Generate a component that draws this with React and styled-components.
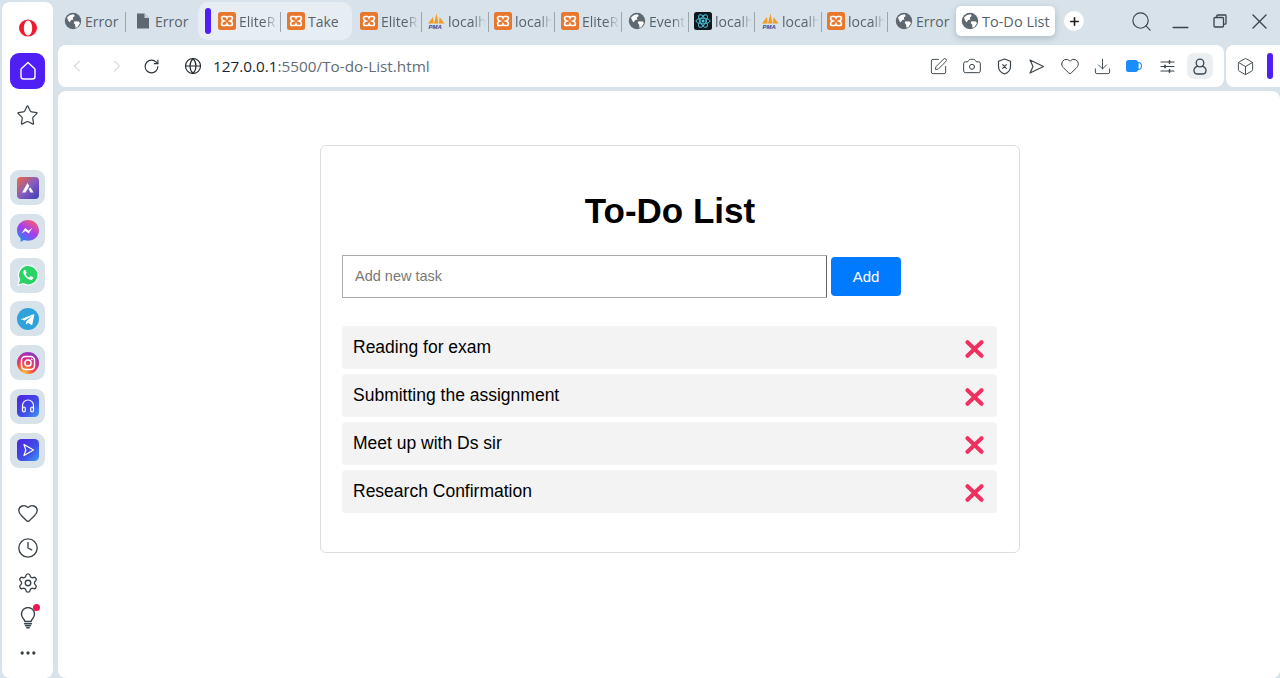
import React from 'react';
import styled, { createGlobalStyle } from 'styled-components';
import {
  ChevronLeft,
  ChevronRight,
  RotateCw,
  Globe,
  SquarePen,
  Camera,
  Heart,
  Download,
  Box,
  Search,
  Minus,
  Plus,
  Star,
  Clock,
  Settings,
  MoreHorizontal,
} from 'lucide-react';

const GlobalStyle = createGlobalStyle`
  html, body {
    margin: 0;
    height: 100%;
    overflow: hidden;
    background: #d7e2ea;
  }
  * { box-sizing: border-box; }
`;

/* favicons and logos */
const GlobeFav = () => (
  <svg width="18" height="18" viewBox="0 0 18 18">
    <circle cx="9" cy="9" r="8.2" fill="#5d6870" />
    <path d="M3 5.5l3-2.6 3.6-.6 1.2 1.6-2 1.6.6 2-2.2.6-1.6 2.4-1.6-2.2zM10.5 9.2l4.6.2.8 1.8-2.6 4-1.8.6-.4-3.2-1.4-1.6z" fill="#fff" />
  </svg>
);

const DocFav = () => (
  <svg width="18" height="18" viewBox="0 0 18 18">
    <path d="M3 1.5h7.5L15 6v10.5H3z" fill="#5d6870" />
    <path d="M10.5 1.5V6H15z" fill="#c9d3db" />
  </svg>
);

const XamppFav = () => (
  <svg width="18" height="18" viewBox="0 0 18 18">
    <rect width="18" height="18" rx="2.5" fill="#e8772e" />
    <path d="M5 4.5h2.6c.8 0 1 .8 1.4 1.6.4-.8.6-1.6 1.4-1.6H13c1 0 1.4 1 1.4 2 0 1.2-1 2-2.4 2.500 1.400.5 2.400 1.300 2.400 2.500 0 1-.4 2-1.400 2h-2.600c-.8 0-1-.8-1.400-1.600-.4.8-.6 1.600-1.400 1.600H5c-1 0-1.400-1-1.400-2 0-1.200 1-2 2.400-2.500-1.400-.5-2.400-1.300-2.400-2.500 0-1 .4-2 1.400-2z" fill="none" stroke="#fff" strokeWidth="1.700" />
  </svg>
);

const PmaFav = () => (
  <svg width="18" height="18" viewBox="0 0 18 18">
    <path d="M1 11.500L6 5l.6 6.500zM7 11.500L9.500 1.500l2 10zM12 11.500L12.500 5l5 6.500z" fill="#f29b1f" />
    <text x="1.500" y="17" fontFamily="Liberation Sans, sans-serif" fontSize="6" fontWeight="700" fontStyle="italic" fill="#35468f">PMA</text>
  </svg>
);

const ReactFav = () => (
  <svg width="18" height="18" viewBox="0 0 18 18">
    <rect width="18" height="18" rx="2.500" fill="#10181f" />
    <g fill="none" stroke="#4fc3dc" strokeWidth="0.900">
      <ellipse cx="9" cy="9" rx="7" ry="2.800" />
      <ellipse cx="9" cy="9" rx="7" ry="2.800" transform="rotate(60 9 9)" />
      <ellipse cx="9" cy="9" rx="7" ry="2.800" transform="rotate(120 9 9)" />
    </g>
    <circle cx="9" cy="9" r="1.500" fill="#4fc3dc" />
  </svg>
);

const OperaLogo = () => (
  <svg width="18" height="18" viewBox="0 0 18 18">
    <ellipse cx="9" cy="9" rx="9" ry="8.600" fill="#f01c2e" />
    <ellipse cx="9" cy="9" rx="4.200" ry="7.400" fill="#fff" />
  </svg>
);

const HomeGlyph = () => (
  <svg width="18" height="20" viewBox="0 0 18 20" fill="none" stroke="#fff" strokeWidth="1.400" strokeLinejoin="round">
    <path d="M9 1.500l6.500 6c.4.4.5.7.5 1.200v6.800c0 1.600-1 2.500-2.500 2.500h-9C3 18 2 17.100 2 15.500V8.700c0-.5.100-.8.500-1.200z" />
  </svg>
);

const ArcApp = () => (
  <svg width="22" height="22" viewBox="0 0 22 22">
    <defs>
      <linearGradient id="arc" x1="0" y1="0" x2="1" y2="1">
        <stop offset="0" stopColor="#ef6a35" />
        <stop offset="0.500" stopColor="#8a5bc0" />
        <stop offset="1" stopColor="#3a3fb5" />
      </linearGradient>
    </defs>
    <rect width="22" height="22" rx="4" fill="url(#arc)" />
    <path d="M5 15.500L10.500 6l1.800 3-3.800 6.500zM11.500 12l2-1.500 3 5h-3z" fill="#fff" />
  </svg>
);

const MessengerApp = () => (
  <svg width="22" height="22" viewBox="0 0 22 22">
    <defs>
      <linearGradient id="msg" x1="0.200" y1="1" x2="0.800" y2="0">
        <stop offset="0" stopColor="#1e8cf5" />
        <stop offset="0.500" stopColor="#a33df0" />
        <stop offset="1" stopColor="#fb5f6e" />
      </linearGradient>
    </defs>
    <path d="M11 0C4.900 0 0 4.500 0 10.500c0 3.200 1.400 5.900 3.600 7.800V22l3.400-1.900c1.200.4 2.600.6 4 .6 6.100 0 11-4.400 11-10.200S17.100 0 11 0z" fill="url(#msg)" />
    <path d="M4.500 13.500l3.600-5.400 3.300 2.500 3.900-2.500-3.600 5.400-3.300-2.500z" fill="#fff" />
  </svg>
);

const WhatsappApp = () => (
  <svg width="22" height="22" viewBox="0 0 22 22">
    <path d="M1 21l1.500-5.400A9.800 9.800 0 1 1 6.300 19.600z" fill="#2bd366" stroke="#fff" strokeWidth="1.200" />
    <path d="M7.800 5.800c-.8.300-1.500 1.300-1.400 2.600.2 3 3.800 6.900 7.200 7.300 1.300.1 2.300-.6 2.600-1.500.1-.4.100-.8 0-.9l-2.300-1.100c-.3-.1-.5 0-.7.200l-.7.900c-.2.200-.4.200-.6.100-1.300-.6-2.500-1.700-3.100-3-.1-.2-.1-.4.100-.6l.6-.8c.1-.2.100-.4 0-.6l-1-2.200c-.2-.4-.5-.4-.7-.4z" fill="#fff" />
  </svg>
);

const TelegramApp = () => (
  <svg width="22" height="22" viewBox="0 0 22 22">
    <circle cx="11" cy="11" r="11" fill="#2fa3d9" />
    <path d="M4.500 11l12-4.800c.6-.2 1 .1.800.9l-2 9.300c-.1.700-.6.800-1.100.5l-3-2.200-1.500 1.400c-.2.200-.4.300-.7.300l.2-3.100 5.600-5c.2-.2 0-.3-.3-.1l-6.900 4.300-3-.9c-.6-.2-.6-.6 0-.9z" fill="#fff" />
  </svg>
);

const InstagramApp = () => (
  <svg width="22" height="22" viewBox="0 0 22 22">
    <defs>
      <radialGradient id="ig" cx="0.300" cy="1" r="1.100">
        <stop offset="0" stopColor="#fdd446" />
        <stop offset="0.350" stopColor="#f4563a" />
        <stop offset="0.650" stopColor="#d42a8c" />
        <stop offset="1" stopColor="#7b3ad0" />
      </radialGradient>
    </defs>
    <circle cx="11" cy="11" r="11" fill="url(#ig)" />
    <rect x="4.500" y="4.500" width="13" height="13" rx="3.800" fill="none" stroke="#fff" strokeWidth="1.500" />
    <circle cx="11" cy="11" r="3.100" fill="none" stroke="#fff" strokeWidth="1.500" />
    <circle cx="14.700" cy="7.300" r="0.900" fill="#fff" />
  </svg>
);

const MusicApp = () => (
  <svg width="22" height="22" viewBox="0 0 22 22">
    <defs>
      <linearGradient id="mus" x1="0" y1="0" x2="1" y2="1">
        <stop offset="0" stopColor="#4f22e0" />
        <stop offset="0.600" stopColor="#3f4fe8" />
        <stop offset="1" stopColor="#3f9bf2" />
      </linearGradient>
    </defs>
    <rect width="22" height="22" rx="4.500" fill="url(#mus)" />
    <path d="M5.500 14v-3.500a5.500 5.500 0 0 1 11 0V14" fill="none" stroke="#fff" strokeWidth="1.200" />
    <rect x="5.500" y="12" width="2.800" height="5" rx="1.400" fill="none" stroke="#fff" strokeWidth="1.200" />
    <rect x="13.700" y="12" width="2.800" height="5" rx="1.400" fill="none" stroke="#fff" strokeWidth="1.200" />
  </svg>
);

const PlayerApp = () => (
  <svg width="22" height="22" viewBox="0 0 22 22">
    <defs>
      <linearGradient id="pla" x1="0" y1="0" x2="1" y2="1">
        <stop offset="0" stopColor="#4f22e0" />
        <stop offset="0.600" stopColor="#3f4fe8" />
        <stop offset="1" stopColor="#3f9bf2" />
      </linearGradient>
    </defs>
    <rect width="22" height="22" rx="4.500" fill="url(#pla)" />
    <path d="M7 5.500l9.500 5.500L7 16.500l1.800-5.500z" fill="none" stroke="#fff" strokeWidth="1.200" strokeLinejoin="round" />
  </svg>
);

const Bulb = () => (
  <svg width="16" height="22" viewBox="0 0 16 22" fill="none" stroke="#3b444b" strokeWidth="1.400" strokeLinecap="round">
    <path d="M5 14.500c-.3-1.500-1.200-2.400-2-3.300a6.500 6.500 0 1 1 10 0c-.8.900-1.700 1.800-2 3.300z" strokeLinejoin="round" />
    <path d="M4.500 16.700h7M5.500 18.700h5M6.800 20.700h2.400" />
  </svg>
);

const ShieldOff = () => (
  <svg width="17" height="17" viewBox="0 0 17 17" fill="none" stroke="#3b444b" strokeWidth="1.200" strokeLinecap="round" strokeLinejoin="round">
    <path d="M8.500 1l6 2.200v5.300c0 3.500-2.600 6.200-6 7.500-3.400-1.300-6-4-6-7.500V3.200z" />
    <path d="M6.700 6.700l3.600 3.600M10.300 6.700l-3.600 3.600" />
  </svg>
);

const SendOutline = () => (
  <svg width="17" height="17" viewBox="0 0 17 17" fill="none" stroke="#3b444b" strokeWidth="1.200" strokeLinejoin="round">
    <path d="M2 2l13.500 6.500L2 15l3-6.500z" />
  </svg>
);

const BatteryBlue = () => (
  <svg width="17" height="14" viewBox="0 0 17 14">
    <rect x="0" y="1" width="12" height="12" rx="2.500" fill="#1a8cff" />
    <path d="M12 3.500c2 0 3.500 1.500 3.500 3.500s-1.500 3.500-3.500 3.500z" fill="#fff" stroke="#1a8cff" strokeWidth="1.100" />
  </svg>
);

const Sliders = () => (
  <svg width="17" height="17" viewBox="0 0 17 17" fill="none" stroke="#3b444b" strokeWidth="1.200" strokeLinecap="round">
    <path d="M2 4h13M2 8.500h13M2 13h13" />
    <path d="M10.500 2.800v2.400M6 7.300v2.400M10.500 11.800v2.400" strokeWidth="1.600" />
  </svg>
);

const ProfileGlyph = () => (
  <svg width="14" height="17" viewBox="0 0 14 17" fill="none" stroke="#3b444b" strokeWidth="1.300">
    <circle cx="7" cy="5" r="3.800" />
    <path d="M4.700 8.200C2.600 8.900 1 10.300 1 12.400 1 14.600 2.500 16 5 16h4c2.500 0 4-1.400 4-3.600 0-2.100-1.600-3.500-3.700-4.200" />
  </svg>
);

const RestoreIcon = () => (
  <svg width="14" height="14" viewBox="0 0 14 14" fill="none" stroke="#3b444b" strokeWidth="1.300">
    <rect x="1" y="3.500" width="9.500" height="9.500" rx="1" />
    <path d="M3.800 3.500V1.800c0-.5.300-.8.800-.8h7.600c.5 0 .8.300.8.800v7.600c0 .5-.3.800-.8.800h-1.700" />
  </svg>
);

const CloseGlyph = () => (
  <svg width="17" height="17" viewBox="0 0 17 17" fill="none" stroke="#3b444b" strokeWidth="1.400" strokeLinecap="round">
    <path d="M2 2l13 13M15 2L2 15" />
  </svg>
);

const DeleteCross = () => (
  <svg width="19" height="18" viewBox="0 0 19 18" fill="none" stroke="#f0305f" strokeWidth="4" strokeLinecap="round">
    <path d="M2.500 2.200l14 13.600M16.500 2.200l-14 13.600" />
  </svg>
);

/* data */
const firstTabs = [
  { id: 1, icon: <GlobeFav />, title: 'Error', width: 68, pad: 6, full: true },
  { id: 2, icon: <DocFav />, title: 'Error', width: 66, pad: 8, plain: true, full: true },
];
const groupTabs = [
  { id: 3, icon: <XamppFav />, title: 'EliteR', width: 70, pad: 7 },
  { id: 4, icon: <XamppFav />, title: 'Take', width: 62, pad: 6, plain: true, full: true },
];
const moreTabs = [
  { id: 5, icon: <XamppFav />, title: 'EliteR', width: 68, pad: 6 },
  { id: 6, icon: <PmaFav />, title: 'localhost', width: 67, pad: 5 },
  { id: 7, icon: <XamppFav />, title: 'localhost', width: 66, pad: 5 },
  { id: 8, icon: <XamppFav />, title: 'EliteR', width: 67, pad: 6 },
  { id: 9, icon: <GlobeFav />, title: 'Events', width: 67, pad: 6 },
  { id: 10, icon: <ReactFav />, title: 'localhost', width: 66, pad: 5 },
  { id: 11, icon: <PmaFav />, title: 'localhost', width: 67, pad: 6 },
  { id: 12, icon: <XamppFav />, title: 'localhost', width: 66, pad: 5 },
  { id: 13, icon: <GlobeFav />, title: 'Error', width: 68, pad: 7, plain: true, full: true },
];

const apps = [
  { id: 'arc', icon: <ArcApp /> },
  { id: 'messenger', icon: <MessengerApp /> },
  { id: 'whatsapp', icon: <WhatsappApp /> },
  { id: 'telegram', icon: <TelegramApp /> },
  { id: 'instagram', icon: <InstagramApp /> },
  { id: 'music', icon: <MusicApp /> },
  { id: 'player', icon: <PlayerApp /> },
];

const tasks = [
  'Reading for exam',
  'Submitting the assignment',
  'Meet up with Ds sir',
  'Research Confirmation',
];

function TabItem({ tab }) {
  return (
    <Tab $width={tab.width} $pad={tab.pad} $plain={tab.plain}>
      {tab.icon}
      <TabLabel $full={tab.full}>{tab.title}</TabLabel>
    </Tab>
  );
}

function App() {
  return (
    <Browser>
      <GlobalStyle />
      <Sidebar>
        <SideTop>
          <LogoSlot>
            <OperaLogo />
          </LogoSlot>
          <HomeTile>
            <HomeGlyph />
          </HomeTile>
          <SideIcon>
            <Star size={23} strokeWidth={1.300} color="#3b444b" />
          </SideIcon>
        </SideTop>
        <AppList>
          {apps.map((app) => (
            <AppTile key={app.id}>{app.icon}</AppTile>
          ))}
        </AppList>
        <SideBottom>
          <SideIcon $short>
            <Heart size={22} strokeWidth={1.500} color="#3b444b" />
          </SideIcon>
          <SideIcon $short>
            <Clock size={22} strokeWidth={1.500} color="#3b444b" />
          </SideIcon>
          <SideIcon $short>
            <Settings size={22} strokeWidth={1.500} color="#3b444b" />
          </SideIcon>
          <SideIcon $short>
            <Bulb />
            <RedDot />
          </SideIcon>
          <SideIcon $short>
            <MoreHorizontal size={20} strokeWidth={2} color="#3b444b" />
          </SideIcon>
        </SideBottom>
      </Sidebar>

      <Main>
        <TabStrip>
          {firstTabs.map((tab) => (
            <TabItem key={tab.id} tab={tab} />
          ))}
          <TabGroup>
            <GroupBar />
            {groupTabs.map((tab) => (
              <TabItem key={tab.id} tab={tab} />
            ))}
          </TabGroup>
          {moreTabs.map((tab) => (
            <TabItem key={tab.id} tab={tab} />
          ))}
          <ActiveTab>
            <GlobeFav />
            To-Do List
          </ActiveTab>
          <NewTab>
            <Plus size={13} strokeWidth={3} color="#222" />
          </NewTab>
          <WindowControls>
            <WindowButton>
              <Search size={23} strokeWidth={1.200} color="#3b444b" />
            </WindowButton>
            <WindowButton>
              <MinimizeGlyph size={25} strokeWidth={1.400} color="#3b444b" />
            </WindowButton>
            <WindowButton>
              <RestoreIcon />
            </WindowButton>
            <WindowButton>
              <CloseGlyph />
            </WindowButton>
          </WindowControls>
        </TabStrip>

        <ToolRow>
          <AddressBar>
            <NavButtons>
              <ChevronLeft size={20} strokeWidth={1.100} color="#b5bcc3" />
              <ChevronRight size={20} strokeWidth={1.100} color="#b5bcc3" />
              <ReloadGlyph size={17} strokeWidth={1.600} color="#2f363c" />
            </NavButtons>
            <Globe size={18} strokeWidth={1.500} color="#20272c" />
            <Url>
              <strong>127.0.0.1</strong>:5500/To-do-List.html
            </Url>
            <ToolIcons>
              <ToolIcon><SquarePen size={19} strokeWidth={1.200} color="#3b444b" /></ToolIcon>
              <ToolIcon><Camera size={20} strokeWidth={1.200} color="#3b444b" /></ToolIcon>
              <ToolIcon><ShieldOff /></ToolIcon>
              <ToolIcon><SendOutline /></ToolIcon>
              <ToolIcon><Heart size={20} strokeWidth={1.200} color="#3b444b" /></ToolIcon>
              <ToolIcon><Download size={19} strokeWidth={1.200} color="#3b444b" /></ToolIcon>
              <ToolIcon><BatteryBlue /></ToolIcon>
              <ToolIcon><Sliders /></ToolIcon>
              <ProfileIcon><ProfileGlyph /></ProfileIcon>
            </ToolIcons>
          </AddressBar>
          <ExtensionBar>
            <Box size={19} strokeWidth={1.200} color="#3b444b" />
            <ExtensionMark />
          </ExtensionBar>
        </ToolRow>

        <Page>
          <Card>
            <Title>To-Do List</Title>
            <AddRow>
              <TaskInput placeholder="Add new task" />
              <AddButton>Add</AddButton>
            </AddRow>
            <TaskList>
              {tasks.map((task) => (
                <TaskRow key={task}>
                  {task}
                  <DeleteButton>
                    <DeleteCross />
                  </DeleteButton>
                </TaskRow>
              ))}
            </TaskList>
          </Card>
        </Page>
      </Main>
    </Browser>
  );
}

const MinimizeGlyph = styled(Minus)`
  margin-top: 12px;
`;

const ReloadGlyph = styled(RotateCw)`
  margin-left: -4.500px;
`;

const Browser = styled.div`
  display: flex;
  width: 1280px;
  height: 678px;
  background: #d7e2ea;
  overflow: hidden;
`;

const Sidebar = styled.aside`
  display: flex;
  flex-direction: column;
  align-items: center;
  width: 51px;
  height: 676px;
  margin: 2px 5px 0 2px;
  background: #fff;
  border-radius: 8px;
`;

const SideTop = styled.div`
  display: flex;
  flex-direction: column;
  align-items: center;
`;

const LogoSlot = styled.div`
  display: flex;
  align-items: center;
  justify-content: center;
  height: 51px;
`;

const HomeTile = styled.div`
  display: flex;
  align-items: center;
  justify-content: center;
  width: 35px;
  height: 36px;
  background: #4f1ff5;
  border-radius: 9px;
`;

const SideIcon = styled.div`
  position: relative;
  display: flex;
  align-items: center;
  justify-content: center;
  width: 35px;
  height: 35px;
  margin-top: ${(p) => (p.$short ? 0 : '9px')};
`;

const RedDot = styled.span`
  position: absolute;
  top: 4px;
  right: 5px;
  width: 7px;
  height: 7px;
  background: #f0144f;
  border-radius: 50%;
`;

const AppList = styled.div`
  display: flex;
  flex-direction: column;
  gap: 8.800px;
  margin-top: 37px;
`;

const AppTile = styled.div`
  display: flex;
  align-items: center;
  justify-content: center;
  width: 35px;
  height: 35px;
  background: #d7e2ea;
  border-radius: 9px;
`;

const SideBottom = styled.div`
  display: flex;
  flex-direction: column;
  margin-top: auto;
  margin-bottom: 8px;
`;

const Main = styled.div`
  display: flex;
  flex-direction: column;
  width: 1222px;
`;

const TabStrip = styled.div`
  display: flex;
  align-items: center;
  height: 45px;
  padding-bottom: 3px;
  font-family: 'Open Sans', sans-serif;
  font-size: 14px;
  color: #59636b;
`;

const Tab = styled.div`
  position: relative;
  display: flex;
  align-items: center;
  gap: 3px;
  flex: none;
  width: ${(p) => p.$width}px;
  height: 30px;
  padding-left: ${(p) => p.$pad}px;
  &::after {
    content: '';
    display: ${(p) => (p.$plain ? 'none' : 'block')};
    position: absolute;
    right: 0;
    top: 6px;
    width: 1px;
    height: 20px;
    background: #9aa5ad;
  }
  svg {
    flex: none;
  }
`;

const TabLabel = styled.span`
  flex: 1;
  min-width: 0;
  margin-right: 3px;
  overflow: ${(p) => (p.$full ? 'visible' : 'hidden')};
  white-space: nowrap;
  ${(p) =>
    !p.$full &&
    `-webkit-mask-image: linear-gradient(to right, #000 65%, transparent 100%);
     mask-image: linear-gradient(to right, #000 65%, transparent 100%);`}
`;

const TabGroup = styled.div`
  display: flex;
  align-items: center;
  flex: none;
  width: 154px;
  height: 38px;
  margin: 0 2px 0 6px;
  padding-left: 7px;
  background: #e6edf3;
  border-radius: 10px;
`;

const GroupBar = styled.span`
  flex: none;
  width: 6px;
  height: 26px;
  background: #4f1ff5;
  border-radius: 3px;
`;

const ActiveTab = styled.div`
  display: flex;
  align-items: center;
  gap: 3px;
  flex: none;
  width: 99px;
  height: 30px;
  padding-left: 5px;
  background: #fff;
  border-radius: 5px;
  box-shadow: 0 2px 6px rgba(60, 80, 100, 0.28);
  font-size: 14.500px;
  white-space: nowrap;
`;

const NewTab = styled.div`
  display: flex;
  align-items: center;
  justify-content: center;
  flex: none;
  width: 20px;
  height: 20px;
  margin-left: 9px;
  background: #fff;
  border-radius: 50%;
`;

const WindowControls = styled.div`
  display: flex;
  align-items: center;
  margin-left: 38px;
`;

const WindowButton = styled.div`
  display: flex;
  align-items: center;
  justify-content: center;
  flex: none;
  width: 39.300px;
  height: 30px;
`;

const ToolRow = styled.div`
  display: flex;
  gap: 2px;
  height: 42px;
`;

const AddressBar = styled.div`
  display: flex;
  align-items: center;
  width: 1166px;
  padding-left: 9px;
  background: #fff;
  border-radius: 8px;
`;

const NavButtons = styled.div`
  display: flex;
  align-items: center;
  gap: 20px;
  width: 116.500px;
`;

const Url = styled.div`
  margin-left: 11.500px;
  font-family: 'Open Sans', sans-serif;
  font-size: 15.300px;
  color: #626c74;
  strong {
    font-weight: 400;
    color: #20272c;
  }
`;

const ToolIcons = styled.div`
  display: flex;
  align-items: center;
  margin-left: auto;
  margin-right: 11px;
`;

const ToolIcon = styled.div`
  display: flex;
  align-items: center;
  justify-content: center;
  width: 32.700px;
  height: 26px;
`;

const ProfileIcon = styled(ToolIcon)`
  width: 26px;
  margin-left: 3px;
  background: #ebeff2;
  border-radius: 7px;
`;

const ExtensionBar = styled.div`
  display: flex;
  align-items: center;
  gap: 12px;
  width: 54px;
  padding-left: 10px;
  background: #fff;
  border-radius: 8px 0 0 8px;
`;

const ExtensionMark = styled.span`
  width: 6px;
  height: 26px;
  background: #4f1ff5;
  border-radius: 3px;
`;

const Page = styled.main`
  flex: 1;
  margin-top: 4px;
  padding: 54px 0 0 2px;
  background: #fff;
  border-radius: 8px;
`;

const Card = styled.section`
  width: 700px;
  height: 408px;
  margin: 0 auto;
  padding: 0 21px;
  background: #fff;
  border: 1px solid #dedede;
  border-radius: 6px;
  font-family: 'Liberation Sans', Arial, sans-serif;
`;

const Title = styled.h1`
  margin: 44px 0 23px;
  font-size: 35px;
  line-height: 42px;
  font-weight: 700;
  text-align: center;
  color: #000;
`;

const AddRow = styled.div`
  display: flex;
  align-items: center;
  gap: 4px;
`;

const TaskInput = styled.input`
  width: 485px;
  height: 43px;
  padding: 0 12px 1px;
  border: 1px solid #aaa;
  border-right: 1px solid #666;
  border-radius: 1px;
  outline: none;
  font-family: inherit;
  font-size: 14.500px;
  &::placeholder {
    color: #777;
  }
`;

const AddButton = styled.button`
  width: 70px;
  height: 39px;
  padding: 0;
  border: none;
  border-radius: 4px;
  background: #007bff;
  color: #fff;
  font-family: inherit;
  font-size: 15px;
`;

const TaskList = styled.ul`
  display: flex;
  flex-direction: column;
  gap: 5px;
  margin: 28px 0 0;
  padding: 0;
  list-style: none;
`;

const TaskRow = styled.li`
  display: flex;
  align-items: center;
  justify-content: space-between;
  width: 655px;
  height: 43px;
  padding: 0 13px 0 11px;
  background: #f3f3f3;
  border-radius: 4px;
  font-size: 17.500px;
  color: #000;
`;

const DeleteButton = styled.span`
  display: flex;
  margin-top: 3px;
`;

export default App;
